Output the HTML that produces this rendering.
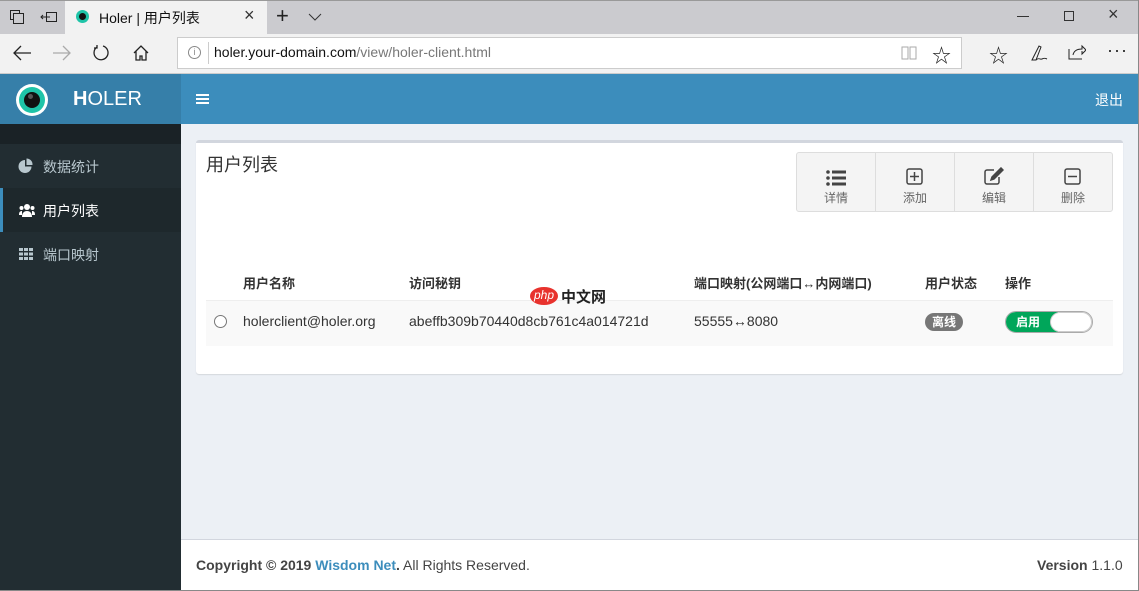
<!DOCTYPE html>
<html><head><meta charset="utf-8"><style>
*{margin:0;padding:0;box-sizing:border-box}
body{width:1139px;height:591px;overflow:hidden;font-family:"Liberation Sans","Noto Sans CJK SC",sans-serif;font-size:14px;color:#333;position:relative;background:#ecf0f5}
.abs{position:absolute}
svg{display:block}
</style></head><body>
<div class="abs" style="left:0;top:0;width:1139px;height:34px;background:#cbcbcf;border-top:1px solid #999"></div>
<div class="abs" style="left:65px;top:1px;width:202px;height:33px;background:#f2f2f2"></div>
<svg class="abs" style="left:10px;top:10px" width="14" height="14" viewBox="0 0 14 14" fill="none" stroke="#222" stroke-width="1"><rect x="0.5" y="0.5" width="9" height="9"/><rect x="3.5" y="3.5" width="10" height="10" fill="#cbcbcf"/></svg>
<svg class="abs" style="left:40px;top:10px" width="17" height="14" viewBox="0 0 17 14" fill="none" stroke="#222"><rect x="6.5" y="2.5" width="10" height="9"/><path d="M1 7h9M3 5l-2 2 2 2"/></svg>
<div class="abs" style="left:76px;top:10px;width:13px;height:13px;border-radius:50%;background:#1fc4a8"></div>
<div class="abs" style="left:79px;top:13px;width:7px;height:7px;border-radius:50%;background:#111"></div>
<div class="abs" style="left:99px;top:8px;font-size:14px;color:#111">Holer | 用户列表</div>
<div class="abs" style="left:244px;top:5px;font-size:18px;color:#333">×</div>
<div class="abs" style="left:276px;top:3px;font-size:22px;color:#222">+</div>
<svg class="abs" style="left:308px;top:13px" width="14" height="8"><path d="M1 1l6 6 6-6" fill="none" stroke="#333"/></svg>
<div class="abs" style="left:1017px;top:16px;width:12px;height:1px;background:#333"></div>
<div class="abs" style="left:1064px;top:11px;width:10px;height:10px;border:1px solid #333"></div>
<div class="abs" style="left:1108px;top:4px;font-size:18px;color:#333">×</div>
<div class="abs" style="left:0;top:34px;width:1139px;height:40px;background:#f2f2f2;border-bottom:1px solid #ccc"></div>
<svg class="abs" style="left:12px;top:44px" width="20" height="18" fill="none" stroke="#222" stroke-width="1.3"><path d="M19 9H2M9 2L2 9l7 7"/></svg>
<svg class="abs" style="left:52px;top:44px" width="20" height="18" fill="none" stroke="#aaa" stroke-width="1.3"><path d="M1 9h17M11 2l7 7-7 7"/></svg>
<svg class="abs" style="left:92px;top:44px" width="18" height="18" fill="none" stroke="#222" stroke-width="1.3"><path d="M5 3A7 7 0 1 0 11 2M5 1v3h-3"/></svg>
<svg class="abs" style="left:132px;top:44px" width="18" height="18" fill="none" stroke="#222" stroke-width="1.3"><path d="M2 9L9 2l7 7M4 7v9h4v-4h2v4h4V7"/></svg>
<div class="abs" style="left:177px;top:37px;width:785px;height:32px;background:#fff;border:1px solid #ccc"></div>
<div class="abs" style="left:188px;top:46px;width:13px;height:13px;border:1px solid #888;border-radius:50%;font-size:9px;text-align:center;line-height:11px;color:#888">i</div>
<div class="abs" style="left:208px;top:42px;width:1px;height:22px;background:#ccc"></div>
<div class="abs" style="left:214px;top:44px;font-size:14px;color:#111">holer.your-domain.com<span style="color:#777">/view/holer-client.html</span></div>
<svg class="abs" style="left:901px;top:46px" width="16" height="14" fill="none" stroke="#aaa"><path d="M1 1h6v12H1zM9 1h6v12H9z"/></svg>
<div class="abs" style="left:932px;top:41px;font-size:19px;color:#222">☆</div>
<div class="abs" style="left:989px;top:41px;font-size:19px;color:#222">☆</div>
<svg class="abs" style="left:1030px;top:44px" width="18" height="18" fill="none" stroke="#222"><path d="M2 16L9 2l2 1-5 13zM6 16c3-3 4 0 6-1s3-1 5 0"/></svg>
<svg class="abs" style="left:1068px;top:44px" width="18" height="16" fill="none" stroke="#222"><path d="M1 5v10h13M5 11c1-5 5-6 9-6V2l4 4-4 4V7"/></svg>
<div class="abs" style="left:1107px;top:40px;font-size:18px;color:#222;letter-spacing:1px">···</div>
<div class="abs" style="left:0;top:74px;width:181px;height:50px;background:#367fa9"></div>
<div class="abs" style="left:181px;top:74px;width:958px;height:50px;background:#3c8dbc"></div>
<div class="abs" style="left:16px;top:84px;width:32px;height:32px;border-radius:50%;background:#fff"></div>
<div class="abs" style="left:19px;top:87px;width:26px;height:26px;border-radius:50%;background:#1fc4a8"></div>
<div class="abs" style="left:24px;top:92px;width:16px;height:16px;border-radius:50%;background:#111"></div>
<div class="abs" style="left:28px;top:94px;width:5px;height:5px;border-radius:50%;background:#555"></div>
<div class="abs" style="left:73px;top:88px;font-size:20px;color:#fff"><b>H</b>OLER</div>
<div class="abs" style="left:196px;top:94px;width:13px;height:2px;background:#fff;box-shadow:0 4px 0 #fff,0 8px 0 #fff"></div>
<div class="abs" style="left:1095px;top:90px;font-size:14px;color:#fff">退出</div>
<div class="abs" style="left:0;top:124px;width:181px;height:467px;background:#222d32"></div>
<div class="abs" style="left:0;top:124px;width:181px;height:20px;background:#1a2226"></div>
<div class="abs" style="left:0;top:188px;width:181px;height:44px;background:#1e282c;border-left:3px solid #3c8dbc"></div>
<svg class="abs" style="left:18px;top:158px" width="16" height="15" fill="#b8c7ce"><path d="M7 2A6.5 6.5 0 1 0 13.5 8.5H7z"/><path d="M8.5 0.5A6 6 0 0 1 14.5 7H8.5z"/></svg>
<div class="abs" style="left:43px;top:157px;color:#b8c7ce">数据统计</div>
<svg class="abs" style="left:19px;top:203px" width="16" height="14" fill="#fff"><circle cx="8" cy="4" r="3"/><circle cx="2.5" cy="5" r="2"/><circle cx="13.5" cy="5" r="2"/><path d="M3 14c0-4 2-6 5-6s5 2 5 6zM0 12c0-3 1-4 3-4v4zM16 12c0-3-1-4-3-4v4z"/></svg>
<div class="abs" style="left:43px;top:201px;color:#fff">用户列表</div>
<svg class="abs" style="left:19px;top:248px" width="14" height="12" fill="#b8c7ce"><rect x="0" y="0" width="4" height="3"/><rect x="5" y="0" width="4" height="3"/><rect x="10" y="0" width="4" height="3"/><rect x="0" y="4.5" width="4" height="3"/><rect x="5" y="4.5" width="4" height="3"/><rect x="10" y="4.5" width="4" height="3"/><rect x="0" y="9" width="4" height="3"/><rect x="5" y="9" width="4" height="3"/><rect x="10" y="9" width="4" height="3"/></svg>
<div class="abs" style="left:43px;top:245px;color:#b8c7ce">端口映射</div>
<div class="abs" style="left:196px;top:140px;width:927px;height:234px;background:#fff;border-top:3px solid #d2d6de;border-radius:3px;box-shadow:0 1px 1px rgba(0,0,0,.1)"></div>
<div class="abs" style="left:206px;top:151px;font-size:18px;color:#333">用户列表</div>
<div class="abs" style="left:796px;top:152px;width:317px;height:60px;background:#f4f4f4;border:1px solid #ddd;border-radius:3px"></div>
<div class="abs" style="left:875px;top:153px;width:1px;height:58px;background:#ddd"></div>
<div class="abs" style="left:954px;top:153px;width:1px;height:58px;background:#ddd"></div>
<div class="abs" style="left:1033px;top:153px;width:1px;height:58px;background:#ddd"></div>
<svg class="abs" style="left:826px;top:170px" width="20" height="16" fill="#444"><circle cx="2" cy="2" r="1.8"/><circle cx="2" cy="8" r="1.8"/><circle cx="2" cy="14" r="1.8"/><rect x="6" y="0.5" width="14" height="3"/><rect x="6" y="6.5" width="14" height="3"/><rect x="6" y="12.5" width="14" height="3"/></svg>
<svg class="abs" style="left:906px;top:168px" width="17" height="17" fill="none" stroke="#444" stroke-width="1.5"><rect x="1" y="1" width="15" height="15" rx="2"/><path d="M8.5 4v9M4 8.5h9"/></svg>
<svg class="abs" style="left:984px;top:167px" width="20" height="18" fill="none" stroke="#444" stroke-width="1.5"><path d="M10 3H3a2 2 0 0 0-2 2v10a2 2 0 0 0 2 2h10a2 2 0 0 0 2-2v-5"/><path d="M17 1l2 2-9 9-3 1 1-3z" fill="#444"/></svg>
<svg class="abs" style="left:1064px;top:168px" width="17" height="17" fill="none" stroke="#444" stroke-width="1.5"><rect x="1" y="1" width="15" height="15" rx="2"/><path d="M4 8.5h9"/></svg>
<div class="abs" style="left:824px;top:189px;font-size:12px;color:#666">详情</div>
<div class="abs" style="left:903px;top:189px;font-size:12px;color:#666">添加</div>
<div class="abs" style="left:982px;top:189px;font-size:12px;color:#666">编辑</div>
<div class="abs" style="left:1061px;top:189px;font-size:12px;color:#666">删除</div>
<div class="abs" style="top:273px;left:243px;font-weight:bold;font-size:13px">用户名称</div>
<div class="abs" style="top:273px;left:409px;font-weight:bold;font-size:13px">访问秘钥</div>
<div class="abs" style="top:273px;left:694px;font-weight:bold;font-size:13px">端口映射(公网端口↔内网端口)</div>
<div class="abs" style="top:273px;left:925px;font-weight:bold;font-size:13px">用户状态</div>
<div class="abs" style="top:273px;left:1005px;font-weight:bold;font-size:13px">操作</div>
<div class="abs" style="left:206px;top:300px;width:907px;height:46px;background:#f9f9f9;border-top:1px solid #eee"></div>
<div class="abs" style="left:214px;top:315px;width:13px;height:13px;border-radius:50%;border:1px solid #777;background:#fff"></div>
<div class="abs" style="top:313px;left:243px">holerclient@holer.org</div>
<div class="abs" style="top:313px;left:409px">abeffb309b70440d8cb761c4a014721d</div>
<div class="abs" style="top:313px;left:694px">55555↔8080</div>
<div class="abs" style="left:925px;top:313px;width:38px;height:18px;border-radius:9px;background:#777;color:#fff;font-size:12px;font-weight:bold;text-align:center;line-height:18px">离线</div>
<div class="abs" style="left:1005px;top:311px;width:88px;height:22px;border-radius:11px;border:1px solid #aaa;background:#fff;overflow:hidden"><div style="width:52px;height:22px;background:#00a65a;color:#fff;font-size:12px;font-weight:bold;line-height:20px;padding-left:10px">启用</div></div>
<div class="abs" style="left:1050px;top:312px;width:42px;height:20px;border-radius:10px;background:#fff;border:1px solid #ccc"></div>
<div class="abs" style="left:530px;top:287px;width:28px;height:18px;border-radius:50%;background:#e8322d;color:#fff;font-size:12px;text-align:center;line-height:16px;font-style:italic">php</div>
<div class="abs" style="left:561px;top:286px;font-size:15px;color:#222;font-weight:bold">中文网</div>
<div class="abs" style="left:181px;top:539px;width:958px;height:52px;background:#fff;border-top:1px solid #d2d6de"></div>
<div class="abs" style="left:196px;top:557px;font-size:14px;color:#444"><b>Copyright © 2019 <span style="color:#3c8dbc">Wisdom Net</span>.</b> All Rights Reserved.</div>
<div class="abs" style="left:1037px;top:557px;font-size:14px;color:#444"><b>Version</b> 1.1.0</div>
<div class="abs" style="left:1138px;top:0;width:1px;height:591px;background:#888"></div>
<div class="abs" style="left:0;top:590px;width:1139px;height:1px;background:#888"></div>
</body></html>
